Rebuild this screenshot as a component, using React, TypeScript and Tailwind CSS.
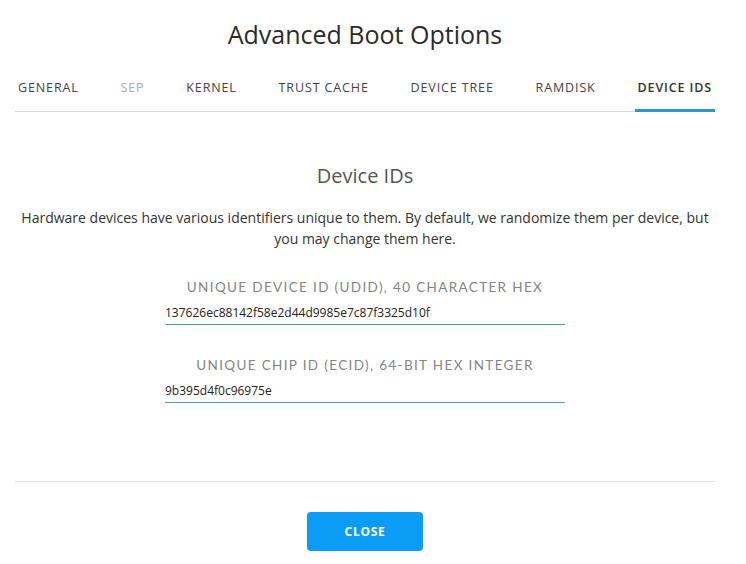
import { useState } from 'react';

const TABS = ['General', 'SEP', 'Kernel', 'Trust Cache', 'Device Tree', 'Ramdisk', 'Device IDs'];

export default function App() {
  const [tab, setTab] = useState('Device IDs');
  const [udid, setUdid] = useState('137626ec88142f58e2d44d9985e7c87f3325d10f');
  const [ecid, setEcid] = useState('9b395d4f0c96975e');

  return (
    <div className="h-[564px] w-[730px] bg-white font-['Open_Sans',sans-serif] text-[#333]">
      <h1 className="pt-[16px] text-center text-[25px] leading-[36px] text-[#2b2b2b]">
        Advanced Boot Options
      </h1>

      <div className="mx-[15px] mt-[27px] flex justify-between border-b border-[#d8d8d8]">
        {TABS.map((t) => {
          const active = t === tab;
          const disabled = t === 'SEP';
          return (
            <button
              key={t}
              type="button"
              onClick={() => !disabled && setTab(t)}
              className={`-mb-px border-b-[3px] px-[3px] pb-[12px] text-[12.5px] uppercase leading-[18px] tracking-[0.07em] ${
                active
                  ? 'border-[#2a97c9] font-semibold text-[#333]'
                  : disabled
                    ? 'border-transparent text-[#aaa]'
                    : 'border-transparent text-[#444]'
              }`}
            >
              {t}
            </button>
          );
        })}
      </div>

      <div className="px-[15px] text-center">
        <h2 className="mt-[50px] text-[20px] leading-[28px] text-[#555]">Device IDs</h2>
        <p className="mx-auto mt-[17px] max-w-[700px] text-[14px] leading-[21px] text-[#333]">
          Hardware devices have various identifiers unique to them. By default, we randomize them
          per device, but you may change them here.
        </p>

        <div className="mx-auto mt-[28px] w-[400px]">
          <label className="block font-['Lato',sans-serif] text-[13.5px] uppercase leading-[20px] tracking-[0.1em] text-[#858585]">
            Unique Device ID (UDID), 40 character hex
          </label>
          <input
            value={udid}
            onChange={(e) => setUdid(e.target.value)}
            className="mt-[7px] block w-full border-b border-[#4a9fb0] pb-[2px] text-left text-[12px] leading-[18px] text-[#222] outline-none"
          />

          <label className="mt-[30px] block font-['Lato',sans-serif] text-[13.5px] uppercase leading-[20px] tracking-[0.1em] text-[#858585]">
            Unique Chip ID (ECID), 64-bit hex integer
          </label>
          <input
            value={ecid}
            onChange={(e) => setEcid(e.target.value)}
            className="mt-[7px] block w-full border-b border-[#4a9fb0] pb-[2px] text-left text-[12px] leading-[18px] text-[#222] outline-none"
          />
        </div>
      </div>

      <div className="mx-[15px] mt-[78px] border-t border-[#e2e2e2]" />

      <div className="mt-[30px] flex justify-center">
        <button
          type="button"
          className="h-[39px] w-[116px] rounded-[4px] bg-[#0b9cf5] text-[12px] font-bold uppercase tracking-[0.06em] text-white"
        >
          Close
        </button>
      </div>
    </div>
  );
}
